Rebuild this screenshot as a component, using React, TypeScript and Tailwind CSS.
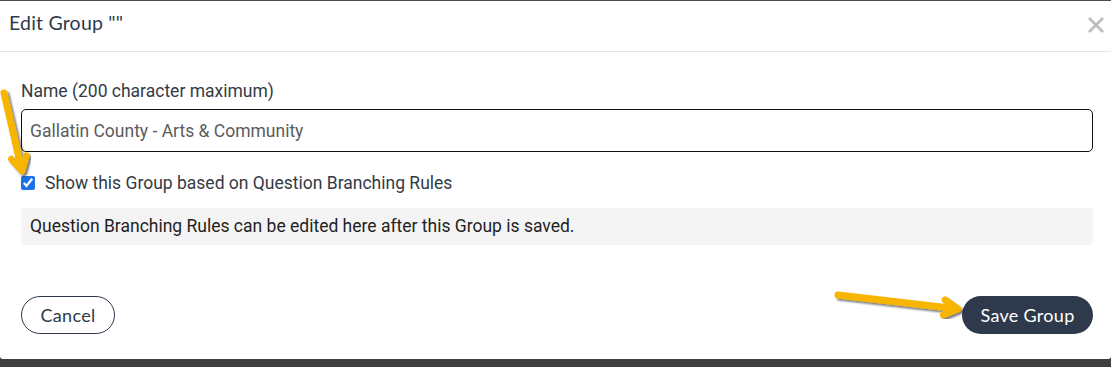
import React, { useState } from 'react';

// --- Overlay arrows (annotation marks on the screenshot) ---
const Arrow: React.FC<{ className: string; x1: number; y1: number; x2: number; y2: number; w: number; h: number }> = ({ className, x1, y1, x2, y2, w, h }) => {
  const angle = Math.atan2(y2 - y1, x2 - x1);
  const head = 16;
  const spread = 0.5;
  const hx1 = x2 - head * Math.cos(angle - spread);
  const hy1 = y2 - head * Math.sin(angle - spread);
  const hx2 = x2 - head * Math.cos(angle + spread);
  const hy2 = y2 - head * Math.sin(angle + spread);
  return (
    <svg className={className} width={w} height={h} viewBox={`0 0 ${w} ${h}`} fill="none">
      <defs>
        <filter id={`sh-${x1}-${y1}`} x="-20%" y="-20%" width="140%" height="140%">
          <feDropShadow dx="2" dy="2" stdDeviation="1.2" floodColor="#000" floodOpacity="0.55" />
        </filter>
      </defs>
      <g filter={`url(#sh-${x1}-${y1})`} stroke="#f7b500" strokeLinecap="round" strokeLinejoin="round">
        <line x1={x1} y1={y1} x2={x2 - 4 * Math.cos(angle)} y2={y2 - 4 * Math.sin(angle)} strokeWidth="7" />
        <polyline points={`${hx1},${hy1} ${x2},${y2} ${hx2},${hy2}`} strokeWidth="6.5" />
      </g>
    </svg>
  );
};

export default function App() {
  const [name, setName] = useState('Gallatin County - Arts & Community');
  const [branching, setBranching] = useState(true);

  return (
    <div className="relative w-[1111px] h-[367px] overflow-hidden bg-gradient-to-b from-[#4a4a4a] to-[#3f3f3f] pt-px">
      <div className="flex flex-col h-[358px] bg-white rounded-b-[3px]">
        {/* Header */}
        <div className="flex items-center justify-between h-[51px] pl-[9px] pr-[6px] border-b border-[#e3e3e3]">
          <h2 className="text-[19.5px] text-[#2e3a4b] tracking-[0.2px] font-['Lato',sans-serif] -mt-[6px]">Edit Group ""</h2>
          <button className="text-[#bdbdbd] -mt-[2px]">
            <svg width="18" height="18" viewBox="0 0 18 18" stroke="currentColor" strokeWidth="2.6">
              <line x1="2" y1="2" x2="16" y2="16" />
              <line x1="16" y1="2" x2="2" y2="16" />
            </svg>
          </button>
        </div>

        {/* Body */}
        <div className="flex flex-col px-[21px] pt-[27px] font-['Roboto',sans-serif] text-[17.5px]">
          <label className="text-[#333b45] leading-[24px]">Name (200 character maximum)</label>
          <input
            value={name}
            onChange={(e) => setName(e.target.value)}
            className="mt-[6px] w-[1072px] h-[43px] px-[8px] border border-[#111] rounded-[5px] text-[#5b5b5b] outline-none"
          />
          <label className="flex items-center gap-[10px] mt-[19px] text-[#333b45] leading-[24px]">
            <input
              type="checkbox"
              checked={branching}
              onChange={(e) => setBranching(e.target.checked)}
              className="w-[14px] h-[14px] accent-[#1a73e8]"
            />
            Show this Group based on Question Branching Rules
          </label>
          <div className="mt-[13px] w-[1072px] h-[37px] flex items-center px-[9px] bg-[#f4f4f4] rounded-[4px] text-[#1f1f1f]">
            Question Branching Rules can be edited here after this Group is saved.
          </div>
        </div>

        {/* Footer */}
        <div className="flex items-center justify-between pl-[21px] pr-[18px] mt-auto mb-[25px] font-['Lato',sans-serif] text-[18px] tracking-[0.3px]">
          <button className="h-[38px] w-[94px] rounded-full border border-[#2e3a4b] text-[#2e3a4b]">Cancel</button>
          <button className="h-[38px] w-[131px] rounded-full bg-[#2e3a4b] text-white">Save Group</button>
        </div>
      </div>

      <Arrow className="absolute left-0 top-[85px]" w={40} h={100} x1={4} y1={8} x2={22} y2={86} />
      <Arrow className="absolute left-[830px] top-[285px]" w={140} h={40} x1={8} y1={10} x2={128} y2={24} />
    </div>
  );
}
